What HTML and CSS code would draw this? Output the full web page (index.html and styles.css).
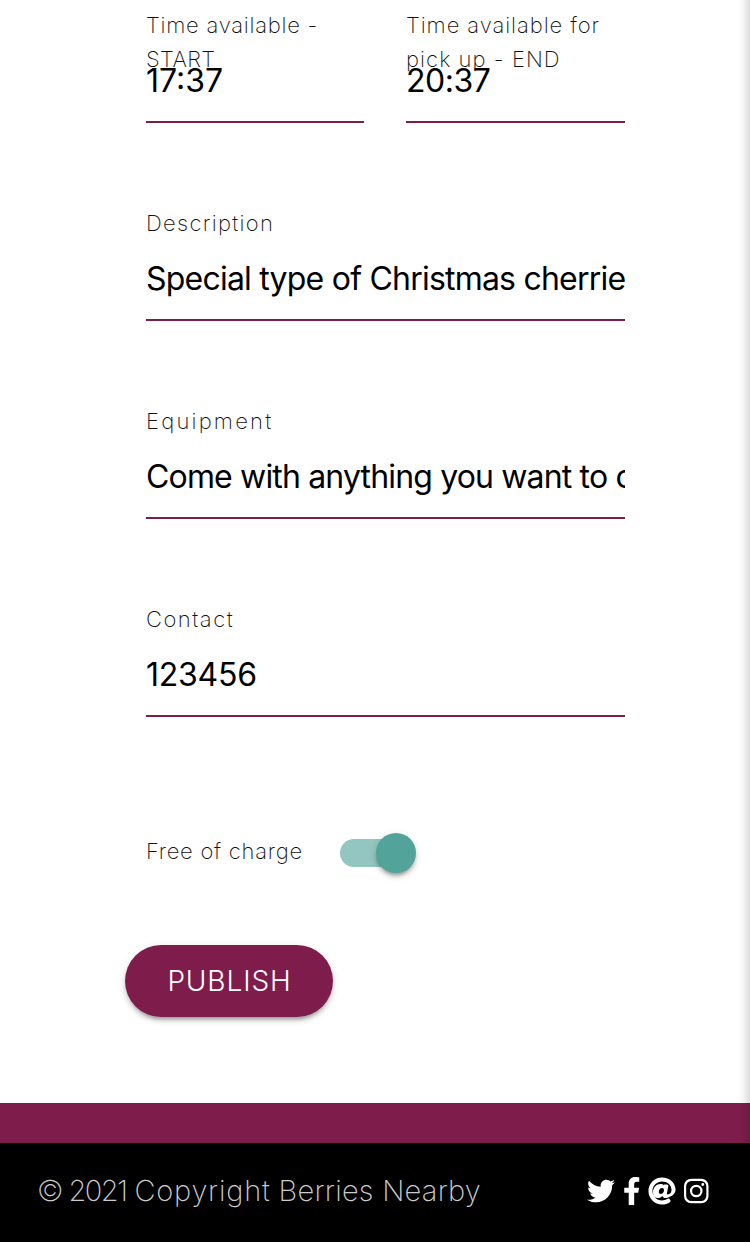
FILE: index.html
```html
<!DOCTYPE html>
<html lang="en">
<head>
<meta charset="utf-8">
<title>Berries Nearby</title>
<link rel="stylesheet" href="styles.css">
</head>
<body>
<main class="page">
  <form class="form">
    <div class="times">
      <div class="field field-time">
        <div class="label"><span class="t-available">Time available -</span><br><span class="t-start">START</span></div>
        <div class="input input-time"><span class="v-time">17:37</span></div>
      </div>
      <div class="field field-time">
        <div class="label"><span class="t-for">Time available for</span><br><span class="t-end">pick up - END</span></div>
        <div class="input input-time"><span class="v-time-end">20:37</span></div>
      </div>
    </div>
    <div class="field">
      <div class="label"><span class="t-description">Description</span></div>
      <div class="input"><span class="v-description">Special type of Christmas cherrie</span></div>
    </div>
    <div class="field">
      <div class="label"><span class="t-equipment">Equipment</span></div>
      <div class="input"><span class="v-equipment">Come with anything you want to c</span></div>
    </div>
    <div class="field">
      <div class="label"><span class="t-contact">Contact</span></div>
      <div class="input"><span class="v-contact">123456</span></div>
    </div>
    <div class="charge">
      <div class="label"><span class="t-charge">Free of charge</span></div>
      <div class="switch"><div class="knob"></div></div>
    </div>
    <button type="button" class="publish">PUBLISH</button>
  </form>
  <div class="edge"></div>
</main>
<footer class="footer">
  <div class="copyright"><span class="c-year">© 2021</span> <span class="c-copy">Copyright</span> <span class="c-name">Berries Nearby</span></div>
  <div class="social">
    <svg width="28" height="28" viewBox="0 0 512 512"><path d="M459.37 151.716c.325 4.548.325 9.097.325 13.645 0 138.72-105.583 298.558-298.558 298.558-59.452 0-114.68-17.219-161.137-47.106 8.447.974 16.568 1.299 25.34 1.299 49.055 0 94.213-16.568 130.274-44.832-46.132-.975-84.792-31.188-98.112-72.772 6.498.974 12.995 1.624 19.818 1.624 9.421 0 18.843-1.3 27.614-3.573-48.081-9.747-84.143-51.98-84.143-102.985v-1.299c13.969 7.797 30.214 12.67 47.431 13.319-28.264-18.843-46.781-51.005-46.781-87.391 0-19.492 5.197-37.36 14.294-52.954 51.655 63.675 129.3 105.258 216.365 109.807-1.624-7.797-2.599-15.918-2.599-24.04 0-57.828 46.782-104.934 104.934-104.934 30.213 0 57.502 12.67 76.67 33.137 23.715-4.548 46.456-13.32 66.599-25.34-7.798 24.366-24.366 44.833-46.132 57.827 21.117-2.273 41.584-8.122 60.426-16.243-14.292 20.791-32.161 39.308-52.628 54.253z"/></svg>
    <svg width="17.5" height="28" viewBox="0 0 320 512"><path d="M279.14 288l14.22-92.66h-88.91v-60.13c0-25.35 12.42-50.06 52.24-50.06h40.42V6.26S260.43 0 225.36 0c-73.22 0-121.08 44.38-121.08 124.72v70.62H22.89V288h81.39v224h100.17V288z"/></svg>
    <svg width="28" height="28" viewBox="0 0 512 512"><path d="M256 8C118.941 8 8 118.919 8 256c0 137.058 110.919 248 248 248 52.925 0 104.68-17.078 147.092-48.319 10.859-7.998 12.77-23.441 4.22-33.87l-15.191-18.53c-7.864-9.593-21.797-11.403-31.919-4.237C320.648 420.018 288.76 430 256 430c-95.941 0-174-78.059-174-174S160.059 82 256 82c94.948 0 174 61.346 174 155 0 46.571-29.396 79.708-67.667 81.966-17.884-.394-18.347-12.78-14.724-30.936l23.434-121.11C373.908 152.111 362.593 138.4 347.5 138.4h-44.981a13.518 13.518 0 0 0-13.432 11.987l-.004.04c-14.697-17.901-40.448-21.775-59.971-21.775-74.58 0-137.831 62.234-137.831 151.46 0 65.303 36.785 105.87 96 105.87 26.984 0 57.369-15.637 74.991-38.333 9.522 34.104 40.613 34.104 70.71 34.104C448.452 361.753 504 289.774 504 237 504 99.79 393.147 8 256 8zm-21.68 304.43c-22.249 0-36.07-15.623-36.07-40.771 0-44.993 30.779-72.729 58.63-72.729 22.292 0 35.601 15.241 35.601 40.77 0 45.061-33.875 72.73-58.161 72.73z"/></svg>
    <svg width="24.5" height="28" viewBox="0 0 448 512"><path fill-rule="evenodd" d="M132 32h184A132 132 0 0 1 448 164v184A132 132 0 0 1 316 480H132A132 132 0 0 1 0 348V164A132 132 0 0 1 132 32zM136 72A96 96 0 0 0 40 168v176a96 96 0 0 0 96 96h176a96 96 0 0 0 96-96V168a96 96 0 0 0-96-96zM224 141a115 115 0 1 0 0 230a115 115 0 1 0 0-230zM224 181a75 75 0 1 1 0 150a75 75 0 1 1 0-150zM343.500 110a26.800 26.800 0 1 0 0 53.600a26.800 26.800 0 1 0 0-53.600z"/></svg>
  </div>
</footer>
</body>
</html>
```
FILE: styles.css
```css
* { box-sizing: border-box; }
body {
  margin: 0;
  width: 750px;
  height: 1242px;
  overflow: hidden;
  background: #fff;
  color: #000;
  font-family: Inter, "Liberation Sans", sans-serif;
}
.page {
  position: relative;
  height: 1143px;
  border-bottom: 40px solid #7e1d4b;
}
.edge {
  position: absolute;
  top: 0;
  right: 0;
  width: 12px;
  height: 1143px;
  background: linear-gradient(to right, rgba(0,0,0,0), rgba(0,0,0,.04) 45%, rgba(0,0,0,.14));
}
.form { padding: 8px 125px 0 146px; }
.times {
  display: grid;
  grid-template-columns: 218px 219px;
  column-gap: 42px;
}
.field { padding-top: 83px; }
.field-time { padding-top: 0; }
.label {
  font-size: 22px;
  line-height: 34px;
  font-weight: 250;
  color: #111;
  white-space: nowrap;
}
.t-available { letter-spacing: .75px; }
.t-start { letter-spacing: .4px; }
.t-for { letter-spacing: .93px; }
.t-end { letter-spacing: 1.05px; }
.t-description { letter-spacing: 1.3px; }
.t-equipment { letter-spacing: 2.2px; }
.t-contact { letter-spacing: 1.5px; }
.t-charge { letter-spacing: .75px; }
.input {
  height: 86px;
  margin-top: -5px;
  border-bottom: 2px solid #7e1d4b;
  overflow: hidden;
  white-space: nowrap;
  font-size: 32px;
  line-height: 88px;
}
.input-time { margin-top: -39px; }
.v-time-end { letter-spacing: -.5px; }
.v-description { letter-spacing: -.78px; }
.v-equipment { letter-spacing: -.84px; }
.v-contact { letter-spacing: -.25px; }
.charge {
  display: flex;
  align-items: center;
  height: 40px;
  margin-top: 116px;
}
.charge .label { width: 194px; padding-bottom: 4px; }
.switch {
  display: flex;
  align-items: center;
  width: 72px;
  height: 28px;
  border-radius: 14px;
  background: #93c6c0;
}
.knob {
  flex: none;
  width: 40px;
  height: 40px;
  margin-left: 36px;
  border-radius: 50%;
  background: #52a399;
  box-shadow: 0 4px 4px rgba(0,0,0,.14), 0 2px 8px rgba(0,0,0,.12), 0 4px 3px -2px rgba(0,0,0,.2);
}
.publish {
  display: block;
  width: 208px;
  height: 72px;
  margin: 72px 0 0 -21px;
  padding: 1px 0 0 1px;
  border: 0;
  border-radius: 36px;
  background: #7e1d4b;
  color: #fff;
  font: 350 28px/71px Inter, sans-serif;
  letter-spacing: .9px;
  box-shadow: 0 4px 4px rgba(0,0,0,.14), 0 2px 8px rgba(0,0,0,.12), 0 5px 3px -3px rgba(0,0,0,.2);
}
.footer {
  display: flex;
  justify-content: space-between;
  align-items: center;
  height: 99px;
  padding: 0 41px 3px 37px;
  background: #000;
}
.copyright {
  padding-bottom: 2px;
  font-size: 29px;
  font-weight: 250;
  color: #ccc;
  white-space: nowrap;
}
.c-year { letter-spacing: -1.6px; }
.c-copy { letter-spacing: .75px; }
.c-name { letter-spacing: .25px; }
.social {
  display: flex;
  align-items: center;
  gap: 7.7px;
  margin-right: .5px;
  fill: #fff;
}
```
